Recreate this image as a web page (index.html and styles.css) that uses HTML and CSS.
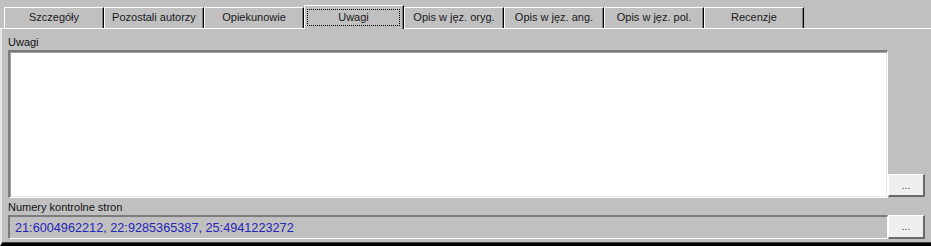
FILE: index.html
```html
<!DOCTYPE html>
<html>
<head>
  <title>Uwagi</title>
  <link rel="stylesheet" href="styles.css">
</head>
<body>
  <div class="tabs">
    <div class="tab">Szczegóły</div>
    <div class="tab">Pozostali autorzy</div>
    <div class="tab">Opiekunowie</div>
    <div class="tab active"><span class="focus">Uwagi</span></div>
    <div class="tab">Opis w jęz. oryg.</div>
    <div class="tab">Opis w jęz. ang.</div>
    <div class="tab">Opis w jęz. pol.</div>
    <div class="tab">Recenzje</div>
  </div>
  <div class="panel">
    <div class="label">Uwagi</div>
    <div class="row">
      <div class="memo"></div>
      <button class="button">...</button>
    </div>
    <div class="label label-small">Numery kontrolne stron</div>
    <div class="row">
      <div class="field">21:6004962212, 22:9285365387, 25:4941223272</div>
      <button class="button button-tall">...</button>
    </div>
  </div>
</body>
</html>
```
FILE: styles.css
```css
* {
  margin: 0;
  padding: 0;
  box-sizing: border-box;
}

html, body {
  width: 100%;
  height: 100%;
  overflow: hidden;
}

body {
  background: #c0c0c0;
  font-family: "Liberation Sans", Arial, sans-serif;
  font-size: 11px;
  color: #000;
}

.tabs {
  display: flex;
  height: 29px;
  padding: 7px 0 0 4px;
  border-bottom: 1px solid #fff;
}

.tab {
  width: 100px;
  height: 21px;
  line-height: 19px;
  text-align: center;
  color: #1a1a1a;
  border-top: 1px solid #fff;
  border-left: 1px solid #fff;
  border-right: 1px solid #000;
  box-shadow: inset -1px 0 #808080;
  white-space: nowrap;
}

.tab.active {
  position: relative;
  height: 24px;
  margin-top: -2px;
  margin-bottom: -1px;
  padding: 3px 3px 0 2px;
  line-height: 15px;
  background: #c0c0c0;
}

.focus {
  display: block;
  height: 17px;
  line-height: 15px;
  border: 1px dotted #000;
}

.panel {
  height: 217px;
  padding: 0 0 0 6px;
  border-left: 2px solid #e4e4e4;
  border-bottom: 3px solid #000;
  box-shadow: inset 0 -1px #404040;
}

.label {
  height: 21px;
  padding-top: 7px;
  line-height: 13px;
  color: #111;
}

.label-small {
  height: 17px;
  padding-top: 3px;
}

.row {
  display: flex;
  align-items: flex-end;
}

.memo {
  width: 880px;
  height: 148px;
  background: #fff;
  border-style: solid;
  border-width: 2px 1px 1px 2px;
  border-color: #7c7c7c #fff #fff #7c7c7c;
  box-shadow: inset 1px 1px #a0a0a0, inset -1px -1px #e8e8e8;
}

.field {
  width: 880px;
  height: 24px;
  padding: 3px 0 0 5px;
  font-size: 12.7px;
  line-height: 16px;
  color: #2525b8;
  border-style: solid;
  border-width: 2px 1px 1px 2px;
  border-color: #7c7c7c #fff #fff #7c7c7c;
}

.button {
  width: 37px;
  height: 23px;
  margin-bottom: 1px;
  font-family: "Liberation Sans", Arial, sans-serif;
  font-size: 10px;
  color: #333;
  background: #efefef;
  border-style: solid;
  border-width: 1px 2px 2px 1px;
  border-color: #fff #6a6a6a #6a6a6a #fff;
}

.button-tall {
  height: 24px;
  margin-bottom: 0;
}
```
